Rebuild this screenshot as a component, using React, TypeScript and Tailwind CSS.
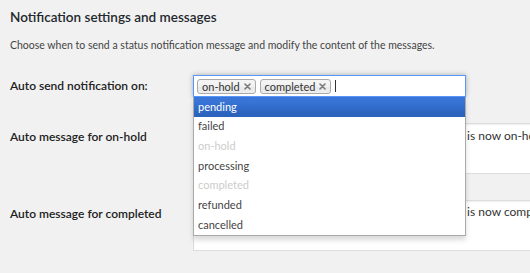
import React from "react";

function Tag({ label }: { label: string }) {
  return (
    <span className="flex items-center h-[15px] pl-[4px] pr-[4px] gap-[4px] border border-[#aaa] rounded-[3px] bg-[linear-gradient(#f4f4f4_20%,#f0f0f0_50%,#e8e8e8_52%,#eeeeee_100%)] text-[11px] leading-[13px] text-[#333]">
      <span>{label}</span>
      <svg width="7" height="7" viewBox="0 0 7 7" className="shrink-0">
        <path d="M1 1 L6 6 M6 1 L1 6" stroke="#7a7a7a" strokeWidth="1.6" strokeLinecap="round" />
      </svg>
    </span>
  );
}

const options: { label: string; state: "hl" | "normal" | "disabled" }[] = [
  { label: "pending", state: "hl" },
  { label: "failed", state: "normal" },
  { label: "on-hold", state: "disabled" },
  { label: "processing", state: "normal" },
  { label: "completed", state: "disabled" },
  { label: "refunded", state: "normal" },
  { label: "cancelled", state: "normal" },
];

export default function App() {
  return (
    <div className="w-[530px] h-[273px] overflow-hidden bg-[#f1f1f1] font-['Lato',sans-serif] text-[#444]">
      <div className="pl-[10px] pt-[8px]">
        <h2 className="text-[13.5px] leading-[18px] font-semibold text-[#23282d]">
          Notification settings and messages
        </h2>
        <p className="mt-[12px] text-[10.5px] leading-[14px] text-[#444]">
          Choose when to send a status notification message and modify the content of the messages.
        </p>

        <div className="mt-[23px] grid grid-cols-[183px_1fr] gap-y-[26px]">
          <div className="flex items-center text-[12px] font-semibold text-[#222]">
            Auto send notification on:
          </div>
          <div className="relative z-10 w-[273px]">
            <div className="flex items-center gap-[4px] h-[22px] pl-[3px] bg-white border border-[#5897fb] shadow-[0_0_5px_rgba(0,0,0,0.3)]">
              <Tag label="on-hold" />
              <Tag label="completed" />
              <span className="w-[1px] h-[12px] bg-[#333]" />
            </div>
            <ul className="absolute left-0 top-full w-[273px] bg-white border border-t-0 border-[#aaa] shadow-[0_4px_5px_rgba(0,0,0,0.15)]">
              {options.map((o) => (
                <li
                  key={o.label}
                  className={
                    "h-[19.7px] flex items-center pl-[4px] text-[11px] " +
                    (o.state === "hl"
                      ? "bg-[linear-gradient(#3875d7_20%,#2a62bc_90%)] text-white"
                      : o.state === "disabled"
                      ? "text-[#ccc]"
                      : "text-[#444]")
                  }
                >
                  {o.label}
                </li>
              ))}
            </ul>
          </div>

          <div className="pt-[5px] text-[12px] font-semibold text-[#222]">Auto message for on-hold</div>
          <div className="w-[400px] h-[51px] bg-white border border-[#ddd] shadow-[inset_0_1px_2px_rgba(0,0,0,0.07)] pl-[8px] pt-[4px] text-[12px] leading-[15px] text-[#333] whitespace-nowrap">
            Hello, your order #{"{order_number}"} from {"{site_title}"} is now on-hold.
          </div>

          <div className="pt-[5px] text-[12px] font-semibold text-[#222]">Auto message for completed</div>
          <div className="w-[400px] h-[51px] bg-white border border-[#ddd] shadow-[inset_0_1px_2px_rgba(0,0,0,0.07)] pl-[8px] pt-[3px] text-[12px] leading-[15px] text-[#333] whitespace-nowrap">
            Hello, your order #{"{order_number}"} from {"{site_title}"} is now completed.
          </div>
        </div>
      </div>
    </div>
  );
}
